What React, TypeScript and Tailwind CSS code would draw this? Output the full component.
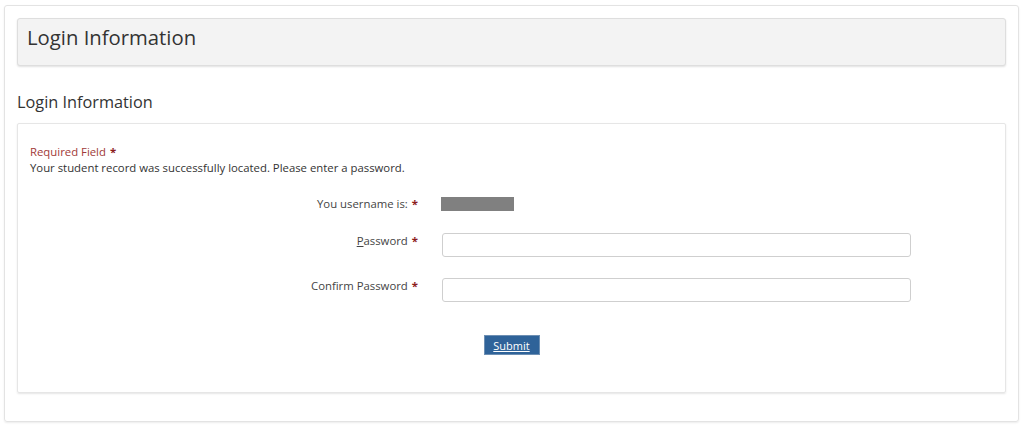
import React from 'react';

const Req = () => <span className="ml-1 font-bold text-[#8c1c1c]">*</span>;

export default function App() {
  return (
    <div className="min-h-[429px] bg-white pt-[5px] pb-[7px] pl-[4px] pr-[5px] font-['Open_Sans','Noto_Sans',sans-serif] text-[#333]">
      <div className="rounded-[3px] border border-[#e3e3e3] p-3 pb-7 shadow-[0_1px_2px_rgba(0,0,0,0.08)]">
        {/* page header */}
        <div className="flex h-[48px] items-center rounded-[3px] border border-[#dedede] bg-[#f3f3f3] pb-[9px] pl-[9px] shadow-[0_1px_2px_rgba(0,0,0,0.12)]">
          <h1 className="text-[20.3px] leading-none text-[#333]">Login Information</h1>
        </div>

        <h2 className="mt-[24px] mb-[9px] text-[16.3px] leading-6 text-[#333]">Login Information</h2>

        {/* form card */}
        <div className="rounded-[2px] border border-[#e6e6e6] px-3 pt-[20px] pb-[37px] text-[11.35px] leading-4 shadow-[0_1px_2px_rgba(0,0,0,0.1)]">
          <p className="text-[#9f3a38]">
            Required Field<Req />
          </p>
          <p>Your student record was successfully located. Please enter a password.</p>

          <div className="mt-[20px] flex items-center">
            <div className="w-[388px] text-right text-[#444]">
              You username is:<Req />
            </div>
            <div className="ml-[23px] h-[14px] w-[73px] bg-[#808080]" />
          </div>

          <div className="mt-[21px] flex items-start">
            <div className="w-[388px] text-right text-[#444]">
              <span className="underline">P</span>assword<Req />
            </div>
            <input
              type="password"
              className="ml-[24px] h-[24px] w-[469px] rounded-[3px] border border-[#cfcfcf] bg-white px-2 outline-none"
            />
          </div>

          <div className="mt-[21px] flex items-start">
            <div className="w-[388px] text-right text-[#444]">
              Confirm Password<Req />
            </div>
            <input
              type="password"
              className="ml-[24px] h-[24px] w-[469px] rounded-[3px] border border-[#cfcfcf] bg-white px-2 outline-none"
            />
          </div>

          <div className="mt-[33px] flex justify-center">
            <button className="h-[20px] w-[56px] border border-[#6d8fb3] bg-[#2f6399] text-[11px] leading-none text-white underline">
              Submit
            </button>
          </div>
        </div>
      </div>
    </div>
  );
}
